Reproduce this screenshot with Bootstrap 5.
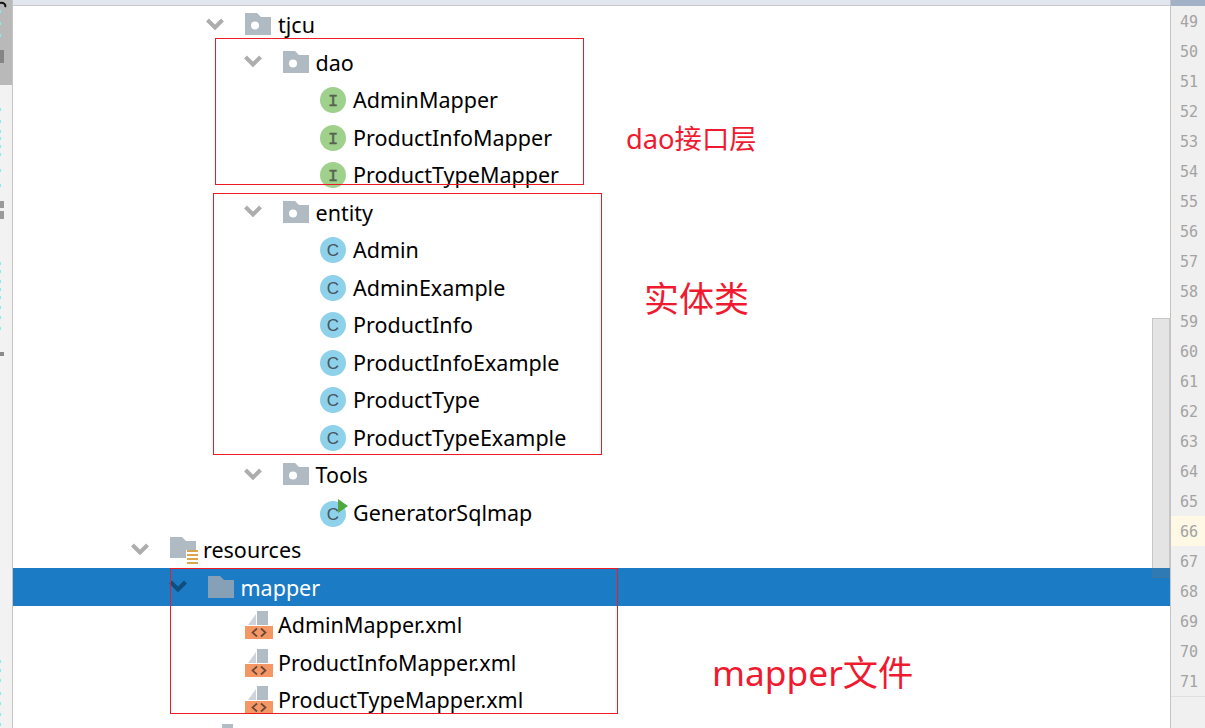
<!DOCTYPE html>
<html lang="zh">
<head>
<meta charset="utf-8">
<title>Project tree</title>
<link href="https://cdn.jsdelivr.net/npm/bootstrap@5.3.0/dist/css/bootstrap.min.css" rel="stylesheet">
<style>
html,body{height:728px;overflow:hidden;background:#fff}
body{font-family:"Noto Sans","Liberation Sans",sans-serif;color:#000}
.ide-shell{width:1205px;height:728px;position:relative}
.side-strip{width:13px;background:#f2f2f2;border-right:1px solid #c4c4c4;flex:none}
.side-strip svg{display:block}
.tree-pane{width:1157px;flex:none;overflow:hidden}
.top-edge{height:5.5px;background:#e2e6ef;border-bottom:1px solid #c8c8c8}
.tree-list{height:723px}
.tree-row{height:37.5px;padding-top:2px;font-size:21.5px;line-height:34px;white-space:nowrap}
.tree-row svg{flex:none;display:block}
.tree-row.is-sel{background:#1b7bc4;color:#fff}
.chev{width:37.5px;flex:none;margin-top:-3px}
.chev svg{margin-left:-1.5px}
.ico-slot{width:26px;margin-right:7px;flex:none}
.ico-slot.is-folder{margin-top:-2px}
.lv0{padding-left:119.5px}.lv1{padding-left:157px}.lv2{padding-left:194.5px}.lv3{padding-left:232px}
.lv4{padding-left:269.5px}
.lv-nudge{padding-left:159px}
.gutter{width:35px;flex:none;background:#f0f0f0;border-left:1px solid #c4c4c4;font-family:"DejaVu Sans Mono","Liberation Mono",monospace;font-size:15px;color:#a3a3a3}
.gutter-top{height:6px;background:#a3b1c6}
.gut-line{height:30px;line-height:32px;text-align:right;padding-right:7px}
.gut-line.is-cur{background:#fff8e4}
.gut-end{border-top:1px solid #e0e0e0}
.scroll-thumb{position:absolute;left:1152px;top:318px;width:18px;height:260px;background:rgba(120,120,120,.2);border:1px solid rgba(110,110,110,.25)}
.note-box{position:absolute;border:1px solid #ed1c24;pointer-events:none}
.note-txt{position:absolute;color:#f01a30;font-family:"Noto Sans","Noto Sans CJK SC",sans-serif;white-space:nowrap;line-height:1}
.nb1{left:215px;top:38px;width:369px;height:147px}
.nb2{left:213px;top:193px;width:389px;height:262px}
.nb3{left:170px;top:568px;width:448px;height:146px}
.nt1{left:626px;top:125px;font-size:27.3px}
.nt2{left:644px;top:281px;font-size:35px}
.nt3{left:712px;top:655px;font-size:35.3px}
</style>
</head>
<body>
<svg width="0" height="0" class="position-absolute">
  <defs>
    <symbol id="i-chev" viewBox="0 0 18 12"><path d="M1.500 2 9 9.500 16.500 2" fill="none" stroke="#adadad" stroke-width="4"/></symbol>
    <symbol id="i-chev-d" viewBox="0 0 18 12"><path d="M1.500 2 9 9.500 16.500 2" fill="none" stroke="#0f4f80" stroke-width="4"/></symbol>
    <symbol id="i-pkg" viewBox="0 0 26 22"><path d="M0 0h12l4 4h10v18H0z" fill="#afbac2"/><circle cx="10" cy="12.500" r="4" fill="#fff"/></symbol>
    <symbol id="i-dir" viewBox="0 0 26 22"><path d="M0 0h12l4 4h10v18H0z" fill="#86a1b7"/></symbol>
    <symbol id="i-res" viewBox="0 0 28 27"><path d="M0 0h12l4 4h10v9H16v8H0z" fill="#afbac2"/><path d="M17 13h11v2H17zM17 17h11v2H17zM17 21h11v2H17zM17 25h11v2H17z" fill="#dba64a"/></symbol>
    <symbol id="i-xml" viewBox="0 0 28 28"><path d="M12 0h11v14H12z" fill="#b2bcc4"/><path d="M3 14 11 3v11z" fill="#cdd3d8"/><path d="M0 15h28v13H0z" fill="#f59665"/><path d="M12 17.500 7.500 21.500 12 25.500M16 17.500 20.500 21.500 16 25.500" fill="none" stroke="#66483a" stroke-width="1.700"/></symbol>
    <symbol id="i-ifc" viewBox="0 0 26 26"><circle cx="13" cy="13" r="13" fill="#9fd08c"/><text x="13" y="19" text-anchor="middle" font-family="Liberation Mono,monospace" font-size="17" fill="#566250" stroke="#566250" stroke-width=".4">I</text></symbol>
    <symbol id="i-cls" viewBox="0 0 26 26"><circle cx="13" cy="13" r="13" fill="#8ed1eb"/><text x="13" y="19" text-anchor="middle" font-family="Liberation Sans,sans-serif" font-size="17" fill="#46535c">C</text></symbol>
  </defs>
</svg>
<div class="ide-shell d-flex">
  <div class="side-strip">
    <svg width="12" height="728" viewBox="0 0 12 728">
      <rect width="12" height="85" fill="#b9b9b9"/>
      <path d="M0 3a4 3 0 0 1 5 4" fill="none" stroke="#111" stroke-width="2"/>
      <rect x="0" y="50" width="4" height="13" fill="#858585"/>
      <g fill="#7ff0f0">
        <rect y="10" width="1" height="3"/><rect y="22" width="1" height="3"/><rect y="34" width="1" height="3"/>
        <rect y="108" width="1" height="3"/><rect y="120" width="1" height="3"/><rect y="130" width="1" height="3"/><rect y="137" width="1" height="3"/><rect y="145" width="1" height="3"/><rect y="153" width="1" height="3"/><rect y="169" width="1" height="3"/><rect y="184" width="1" height="3"/>
        <rect y="262" width="1" height="3"/><rect y="270" width="1" height="3"/><rect y="280" width="1" height="3"/><rect y="288" width="1" height="3"/><rect y="296" width="1" height="3"/><rect y="306" width="1" height="3"/><rect y="316" width="1" height="3"/><rect y="327" width="1" height="3"/>
        <rect y="660" width="1" height="3"/><rect y="669" width="1" height="3"/><rect y="679" width="1" height="3"/><rect y="692" width="1" height="3"/><rect y="702" width="1" height="3"/><rect y="713" width="1" height="3"/><rect y="723" width="1" height="3"/>
      </g>
      <rect y="201" width="4" height="7" fill="#9a9a9a"/><rect y="211" width="4" height="8" fill="#9a9a9a"/>
      <rect y="352" width="4" height="4" fill="#8a8a8a"/>
    </svg>
  </div>
  <div class="tree-pane">
    <div class="top-edge"></div>
    <ul class="tree-list list-unstyled m-0">
      <li class="tree-row d-flex align-items-center lv2"><span class="chev"><svg width="18" height="12"><use href="#i-chev"/></svg></span><span class="ico-slot is-folder"><svg width="26" height="22"><use href="#i-pkg"/></svg></span>tjcu</li>
      <li class="tree-row d-flex align-items-center lv3"><span class="chev"><svg width="18" height="12"><use href="#i-chev"/></svg></span><span class="ico-slot is-folder"><svg width="26" height="22"><use href="#i-pkg"/></svg></span>dao</li>
      <li class="tree-row d-flex align-items-center lv4"><span class="chev"></span><span class="ico-slot"><svg width="26" height="26"><use href="#i-ifc"/></svg></span>AdminMapper</li>
      <li class="tree-row d-flex align-items-center lv4"><span class="chev"></span><span class="ico-slot"><svg width="26" height="26"><use href="#i-ifc"/></svg></span>ProductInfoMapper</li>
      <li class="tree-row d-flex align-items-center lv4"><span class="chev"></span><span class="ico-slot"><svg width="26" height="26"><use href="#i-ifc"/></svg></span>ProductTypeMapper</li>
      <li class="tree-row d-flex align-items-center lv3"><span class="chev"><svg width="18" height="12"><use href="#i-chev"/></svg></span><span class="ico-slot is-folder"><svg width="26" height="22"><use href="#i-pkg"/></svg></span>entity</li>
      <li class="tree-row d-flex align-items-center lv4"><span class="chev"></span><span class="ico-slot"><svg width="26" height="26"><use href="#i-cls"/></svg></span>Admin</li>
      <li class="tree-row d-flex align-items-center lv4"><span class="chev"></span><span class="ico-slot"><svg width="26" height="26"><use href="#i-cls"/></svg></span>AdminExample</li>
      <li class="tree-row d-flex align-items-center lv4"><span class="chev"></span><span class="ico-slot"><svg width="26" height="26"><use href="#i-cls"/></svg></span>ProductInfo</li>
      <li class="tree-row d-flex align-items-center lv4"><span class="chev"></span><span class="ico-slot"><svg width="26" height="26"><use href="#i-cls"/></svg></span>ProductInfoExample</li>
      <li class="tree-row d-flex align-items-center lv4"><span class="chev"></span><span class="ico-slot"><svg width="26" height="26"><use href="#i-cls"/></svg></span>ProductType</li>
      <li class="tree-row d-flex align-items-center lv4"><span class="chev"></span><span class="ico-slot"><svg width="26" height="26"><use href="#i-cls"/></svg></span>ProductTypeExample</li>
      <li class="tree-row d-flex align-items-center lv3"><span class="chev"><svg width="18" height="12"><use href="#i-chev"/></svg></span><span class="ico-slot is-folder"><svg width="26" height="22"><use href="#i-pkg"/></svg></span>Tools</li>
      <li class="tree-row d-flex align-items-center lv4"><span class="chev"></span><span class="ico-slot is-folder"><svg width="28" height="30" viewBox="0 0 28 30"><circle cx="13" cy="17" r="13" fill="#8ed1eb"/><text x="13" y="23" text-anchor="middle" font-family="Liberation Sans,sans-serif" font-size="17" fill="#46535c">C</text><path d="M18 2l10 7-10 7z" fill="#4fa83d"/></svg></span>GeneratorSqlmap</li>
      <li class="tree-row d-flex align-items-center lv0"><span class="chev"><svg width="18" height="12"><use href="#i-chev"/></svg></span><span class="ico-slot"><svg width="28" height="27"><use href="#i-res"/></svg></span>resources</li>
      <li class="tree-row is-sel d-flex align-items-center lv1"><span class="chev"><svg width="18" height="12"><use href="#i-chev-d"/></svg></span><span class="ico-slot is-folder"><svg width="26" height="22"><use href="#i-dir"/></svg></span>mapper</li>
      <li class="tree-row d-flex align-items-center lv2"><span class="chev"></span><span class="ico-slot"><svg width="28" height="28"><use href="#i-xml"/></svg></span>AdminMapper.xml</li>
      <li class="tree-row d-flex align-items-center lv2"><span class="chev"></span><span class="ico-slot"><svg width="28" height="28"><use href="#i-xml"/></svg></span>ProductInfoMapper.xml</li>
      <li class="tree-row d-flex align-items-center lv2"><span class="chev"></span><span class="ico-slot"><svg width="28" height="28"><use href="#i-xml"/></svg></span>ProductTypeMapper.xml</li>
      <li class="tree-row d-flex align-items-center lv-nudge"><span class="chev"></span><span class="ico-slot"><svg width="28" height="28"><use href="#i-xml"/></svg></span></li>
    </ul>
  </div>
  <div class="gutter">
    <div class="gutter-top"></div>
    <div class="gut-line">49</div><div class="gut-line">50</div><div class="gut-line">51</div><div class="gut-line">52</div><div class="gut-line">53</div><div class="gut-line">54</div><div class="gut-line">55</div><div class="gut-line">56</div><div class="gut-line">57</div><div class="gut-line">58</div><div class="gut-line">59</div><div class="gut-line">60</div><div class="gut-line">61</div><div class="gut-line">62</div><div class="gut-line">63</div><div class="gut-line">64</div><div class="gut-line">65</div><div class="gut-line is-cur">66</div><div class="gut-line">67</div><div class="gut-line">68</div><div class="gut-line">69</div><div class="gut-line">70</div><div class="gut-line">71</div>
    <div class="gut-end"></div>
  </div>
  <div class="scroll-thumb"></div>
  <div class="note-box nb1"></div>
  <div class="note-box nb2"></div>
  <div class="note-box nb3"></div>
  <div class="note-txt nt1">dao接口层</div>
  <div class="note-txt nt2">实体类</div>
  <div class="note-txt nt3">mapper文件</div>
</div>
<script src="https://cdn.jsdelivr.net/npm/bootstrap@5.3.0/dist/js/bootstrap.bundle.min.js"></script>
</body>
</html>
